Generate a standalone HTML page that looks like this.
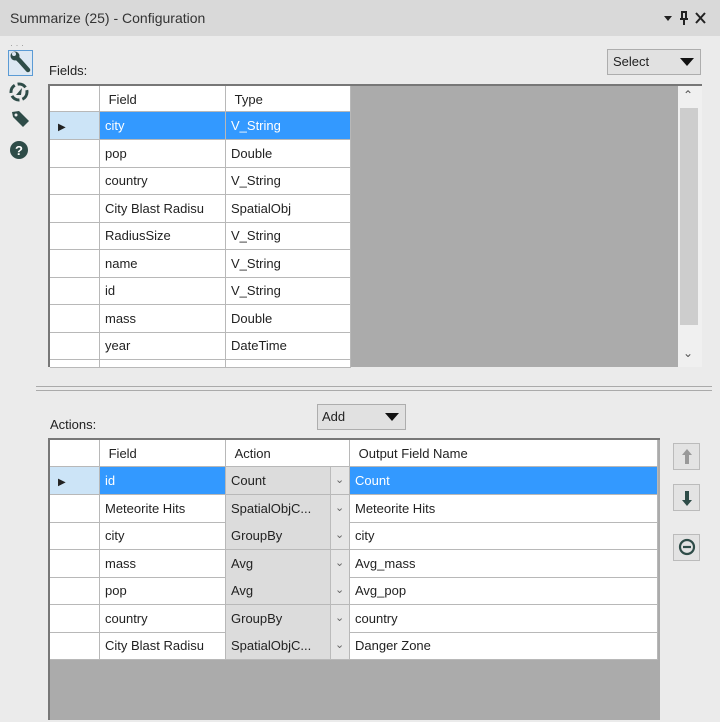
<!DOCTYPE html>
<html><head><style>
*{box-sizing:border-box;margin:0;padding:0}
body{width:720px;height:722px;background:#ebebeb;font-family:"Liberation Sans",sans-serif;font-size:13px;color:#222;position:relative;overflow:hidden}
.a{position:absolute}
.t{position:absolute;white-space:nowrap;line-height:14px}
.grid{position:absolute;background:#fff}
.c{position:absolute;border-right:1px solid #b8b8b8;border-bottom:1px solid #b8b8b8;padding-left:5px;line-height:28px;white-space:nowrap;overflow:hidden}
.sel{background:#3399ff;color:#fff}
.dd{position:absolute;background:#e1e1e1;border:1px solid #adadad}
</style></head><body>
<div class="a" style="left:0;top:0;width:720px;height:36px;background:#d9d9d9"></div>
<div class="t" style="left:10px;top:11px;font-size:14px;color:#333">Summarize (25) - Configuration</div>
<svg class="a" style="left:660px;top:10px" width="50" height="16">
<path d="M4 6h8l-4 5z" fill="#222"/>
<path d="M21 2h6M22 2v7h4V2M20 9h8M24 9v6" stroke="#222" stroke-width="2" fill="none"/>
<path d="M36 3l9 10M45 3l-9 10" stroke="#222" stroke-width="2"/>
</svg>
<div class="t" style="left:10px;top:38px;font-size:9px;color:#999">· · ·</div>
<div class="a" style="left:8px;top:50px;width:25px;height:26px;border:1px solid #5b9bd5;background:#dde8f3"></div>
<svg class="a" style="left:6px;top:48px" width="30" height="120">
<path d="M8 7l6 6 8 9" stroke="#2e4c48" stroke-width="4.5" stroke-linecap="round" fill="none"/>
<circle cx="9" cy="8" r="4.5" fill="#2e4c48"/><circle cx="8" cy="6" r="2" fill="#dde8f3"/>
<circle cx="13" cy="44" r="8" stroke="#2e4c48" stroke-width="3" fill="none" stroke-dasharray="9 3"/>
<path d="M10 47l6-7-1 7z" fill="#2e4c48"/>
<path d="M6 64l7-1 10 10-6 6-10-10z" fill="#2e4c48"/><circle cx="10" cy="67" r="1.5" fill="#eee"/>
<circle cx="13" cy="102" r="9" fill="#2e4c48"/>
<text x="13" y="107" font-size="13" font-weight="bold" fill="#fff" text-anchor="middle" font-family="Liberation Sans">?</text>
</svg>

<div class="t" style="left:49px;top:64px">Fields:</div>
<div class="dd" style="left:607px;top:49px;width:94px;height:26px;"></div>
<div class="t" style="left:613px;top:55px">Select</div>
<svg class="a" style="left:680px;top:58px" width="14" height="9"><path d="M0 0h14L7 8z" fill="#111"/></svg>

<div class="a" style="left:48px;top:84px;width:654px;height:283px;background:#ababab;border-top:2px solid #777;border-left:2px solid #777;"></div>
<div class="grid" style="left:50px;top:86px;width:301px;height:281px"></div>
<div class="a" style="left:678px;top:86px;width:24px;height:281px;background:#f0f0f0"></div>
<div class="a" style="left:680px;top:108px;width:18px;height:217px;background:#cdcdcd"></div>
<div class="t" style="left:683px;top:88px;font-size:12px;color:#555">&#8963;</div>
<div class="t" style="left:683px;top:346px;font-size:12px;color:#555">&#8964;</div>
<div id="f"></div>

<div class="a" style="left:36px;top:386px;width:676px;height:5px;border-top:1px solid #aaa;border-bottom:1px solid #aaa"></div>

<div class="t" style="left:50px;top:418px">Actions:</div>
<div class="dd" style="left:317px;top:404px;width:89px;height:26px"></div>
<div class="t" style="left:322px;top:410px">Add</div>
<svg class="a" style="left:385px;top:413px" width="14" height="9"><path d="M0 0h14L7 8z" fill="#111"/></svg>

<div class="a" style="left:48px;top:438px;width:612px;height:282px;background:#ababab;border-top:2px solid #777;border-left:2px solid #777"></div>
<div class="grid" style="left:50px;top:440px;width:608px;height:219px"></div>
<div id="g"></div>

<div class="dd" style="left:673px;top:443px;width:27px;height:27px;background:#e3e3e3;border-color:#bbb"></div>
<div class="dd" style="left:673px;top:484px;width:27px;height:27px;background:#e3e3e3;border-color:#bbb"></div>
<div class="dd" style="left:673px;top:534px;width:27px;height:27px;background:#e3e3e3;border-color:#bbb"></div>
<svg class="a" style="left:673px;top:443px" width="28" height="120">
<path d="M14 6l-5 6h3v9h4v-9h3z" fill="#999"/>
<path d="M14 63l-5-6h3v-9h4v9h3z" fill="#2e4c48"/>
<circle cx="14" cy="104" r="7" stroke="#2e4c48" stroke-width="2.2" fill="none"/><path d="M10 104h8" stroke="#2e4c48" stroke-width="2.2"/>
</svg>

<script>
var f=[["city","V_String"],["pop","Double"],["country","V_String"],["City Blast Radisu","SpatialObj"],["RadiusSize","V_String"],["name","V_String"],["id","V_String"],["mass","Double"],["year","DateTime"],["",""]];
var h='',y=86;
function cell(x,y,w,hh,t,cls,st){return '<div class="c '+(cls||'')+'" style="left:'+x+'px;top:'+y+'px;width:'+w+'px;height:'+hh+'px;'+(st||'')+'">'+t+'</div>';}
h+=cell(50,y,50,26,'')+cell(100,y,126,26,'&nbsp;Field','',"line-height:27px")+cell(226,y,125,26,'&nbsp;Type','',"line-height:27px");
for(var i=0;i<f.length;i++){var yy=Math.round(112+i*27.5);var s=i==0;var hh=i==9?8:28;
h+=cell(50,yy,50,hh,s?'<span style="font-size:10px;color:#222">&#9654;</span>':'','',s?'background:#cce4f7;padding-left:8px':'')+cell(100,yy,126,hh,f[i][0],s?'sel':'')+cell(226,yy,125,hh,f[i][1],s?'sel':'');}
document.getElementById('f').innerHTML=h;
var g=[["id","Count","Count"],["Meteorite Hits","SpatialObjC...","Meteorite Hits"],["city","GroupBy","city"],["mass","Avg","Avg_mass"],["pop","Avg","Avg_pop"],["country","GroupBy","country"],["City Blast Radisu","SpatialObjC...","Danger Zone"]];
h='';y=440;
h+=cell(50,y,50,27,'')+cell(100,y,126,27,'&nbsp;Field')+cell(226,y,124,27,'&nbsp;Action')+cell(350,y,308,27,'&nbsp;Output Field Name');
for(i=0;i<g.length;i++){var yy=Math.round(467+i*27.5);var s=i==0;
h+=cell(50,yy,50,28,s?'<span style="font-size:10px">&#9654;</span>':'','',s?'background:#cce4f7;padding-left:8px':'')+cell(100,yy,126,28,g[i][0],s?'sel':'')+cell(226,yy,105,28,g[i][1],'','background:#dcdcdc;border-right:1px solid #bbb')+cell(331,yy,19,28,'<span style="font-size:11px;color:#666">&#8964;</span>','','background:#e6e6e6;padding-left:4px;line-height:24px')+cell(350,yy,308,28,g[i][2],s?'sel':'');}
document.getElementById('g').innerHTML=h;
</script>
</body></html>
